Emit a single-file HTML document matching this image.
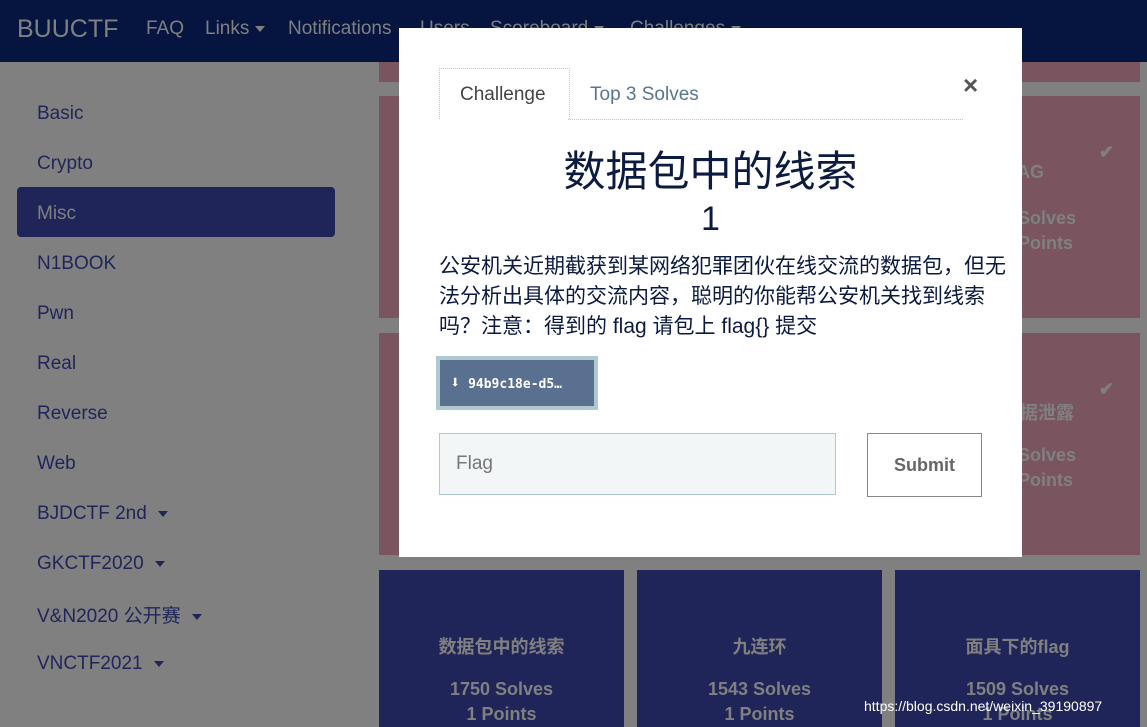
<!DOCTYPE html>
<html><head><meta charset="utf-8"><style>
body{margin:0;width:1147px;height:727px;overflow:hidden;background:#808080;font-family:"Liberation Sans","Noto Sans CJK SC",sans-serif;position:relative}
.nav{position:absolute;left:0;top:0;width:1147px;height:62px;background:#061440}
.nav span{position:absolute;top:18px;color:#808080;font-size:19px}
.side a{position:absolute;left:37px;color:#1f2559;font-size:19px}
.act{position:absolute;left:17px;top:187px;width:318px;height:50px;background:#1f2559;border-radius:4px}
.card{position:absolute;width:245px;text-align:center;color:#808080;font-weight:bold;font-size:18px}
.pk{background:#7a5560}.bl{background:#1f2559}
.modal{position:absolute;left:399px;top:28px;width:623px;height:529px;background:#fff}
.caret{display:inline-block;border-left:5px solid transparent;border-right:5px solid transparent;border-top:6px solid #808080;vertical-align:middle;margin-left:6px}
</style></head><body>
<div class="nav">
<span style="left:17px;top:15px;font-size:25px">BUUCTF</span>
<span style="left:146px">FAQ</span>
<span style="left:205px">Links<i class="caret"></i></span>
<span style="left:288px">Notifications</span>
<span style="left:420px">Users</span>
<span style="left:490px">Scoreboard<i class="caret"></i></span>
<span style="left:630px">Challenges<i class="caret"></i></span>
</div>
<div class="act"></div>
<div class="side">
<a style="top:103px">Basic</a><a style="top:153px">Crypto</a><a style="top:203px;color:#808080">Misc</a>
<a style="top:253px">N1BOOK</a><a style="top:303px">Pwn</a><a style="top:353px">Real</a>
<a style="top:403px">Reverse</a><a style="top:453px">Web</a>
<a style="top:503px">BJDCTF 2nd <i class="caret" style="border-top-color:#1f2559"></i></a>
<a style="top:553px">GKCTF2020 <i class="caret" style="border-top-color:#1f2559"></i></a>
<a style="top:601px">V&amp;N2020 公开赛 <i class="caret" style="border-top-color:#1f2559"></i></a>
<a style="top:653px">VNCTF2021 <i class="caret" style="border-top-color:#1f2559"></i></a>
</div>
<div class="card pk" style="left:379px;top:62px;height:20px"></div>
<div class="card pk" style="left:637px;top:62px;height:20px"></div>
<div class="card pk" style="left:895px;top:62px;height:20px;width:245px"></div>
<div class="card pk" style="left:379px;top:96px;height:222px"></div>
<div class="card pk" style="left:895px;top:96px;height:222px"><div style="position:absolute;right:26px;top:46px">✔</div><div style="position:absolute;left:122px;top:66px">AG</div><div style="position:absolute;left:108px;top:110px;line-height:25px;text-align:left">1 Solves<br>1 Points</div></div>
<div class="card pk" style="left:379px;top:333px;height:222px"></div>
<div class="card pk" style="left:895px;top:333px;height:222px"><div style="position:absolute;right:26px;top:46px">✔</div><div style="position:absolute;left:107px;top:66px">数据泄露</div><div style="position:absolute;left:108px;top:110px;line-height:25px;text-align:left">1 Solves<br>1 Points</div></div>
<div class="card bl" style="left:379px;top:570px;height:157px"><div style="margin-top:63px">数据包中的线索</div><div style="margin-top:18px;line-height:25px">1750 Solves<br>1 Points</div></div>
<div class="card bl" style="left:637px;top:570px;height:157px"><div style="margin-top:63px">九连环</div><div style="margin-top:18px;line-height:25px">1543 Solves<br>1 Points</div></div>
<div class="card bl" style="left:895px;top:570px;height:157px"><div style="margin-top:63px">面具下的flag</div><div style="margin-top:18px;line-height:25px">1509 Solves<br>1 Points</div></div>
<div style="position:absolute;left:864px;top:698px;color:#fff;font-size:14px">https://blog.csdn.net/weixin_39190897</div>
<div class="modal">
<div style="position:absolute;left:40px;top:40px;width:129px;height:50px;border:1px dotted #b8c8d0;border-bottom:none"></div>
<div style="position:absolute;left:169px;top:91px;width:395px;border-top:1px dotted #b8c8d0"></div>
<div style="position:absolute;left:61px;top:56px;font-size:19px;color:#444">Challenge</div>
<div style="position:absolute;left:191px;top:56px;font-size:19px;color:#5a7590">Top 3 Solves</div>
<div style="position:absolute;left:564px;top:42px;font-size:26px;color:#555;font-weight:bold">×</div>
<div style="position:absolute;left:0;width:623px;top:110px;text-align:center;font-size:42px;color:#0b1a3f">数据包中的线索</div>
<div style="position:absolute;left:0;width:623px;top:172px;text-align:center;font-size:34px;color:#0b1a3f">1</div>
<div style="position:absolute;left:40px;top:224px;width:570px;font-size:21px;line-height:30px;color:#0b1a3f">公安机关近期截获到某网络犯罪团伙在线交流的数据包，但无法分析出具体的交流内容，聪明的你能帮公安机关找到线索吗？注意：得到的 flag 请包上 flag{} 提交</div>
<div style="position:absolute;left:37px;top:328px;width:162px;height:54px;background:#5a7090;border:4px solid #b0c8d0;box-sizing:border-box;color:#fff;font-family:'DejaVu Sans Mono',monospace;font-weight:bold;font-size:13px;line-height:46px;padding-left:10px"><span style="font-size:17px">⬇</span> 94b9c18e-d5…</div>
<div style="position:absolute;left:40px;top:405px;width:397px;height:62px;border:1px solid #b0c8d0;box-sizing:border-box;background:#f3f6f7;font-size:19px;color:#777;line-height:60px;padding-left:16px">Flag</div>
<div style="position:absolute;left:468px;top:405px;width:115px;height:64px;border:1px solid #888;box-sizing:border-box;text-align:center;line-height:62px;font-size:18px;font-weight:bold;color:#666">Submit</div>
</div>
</body></html>
